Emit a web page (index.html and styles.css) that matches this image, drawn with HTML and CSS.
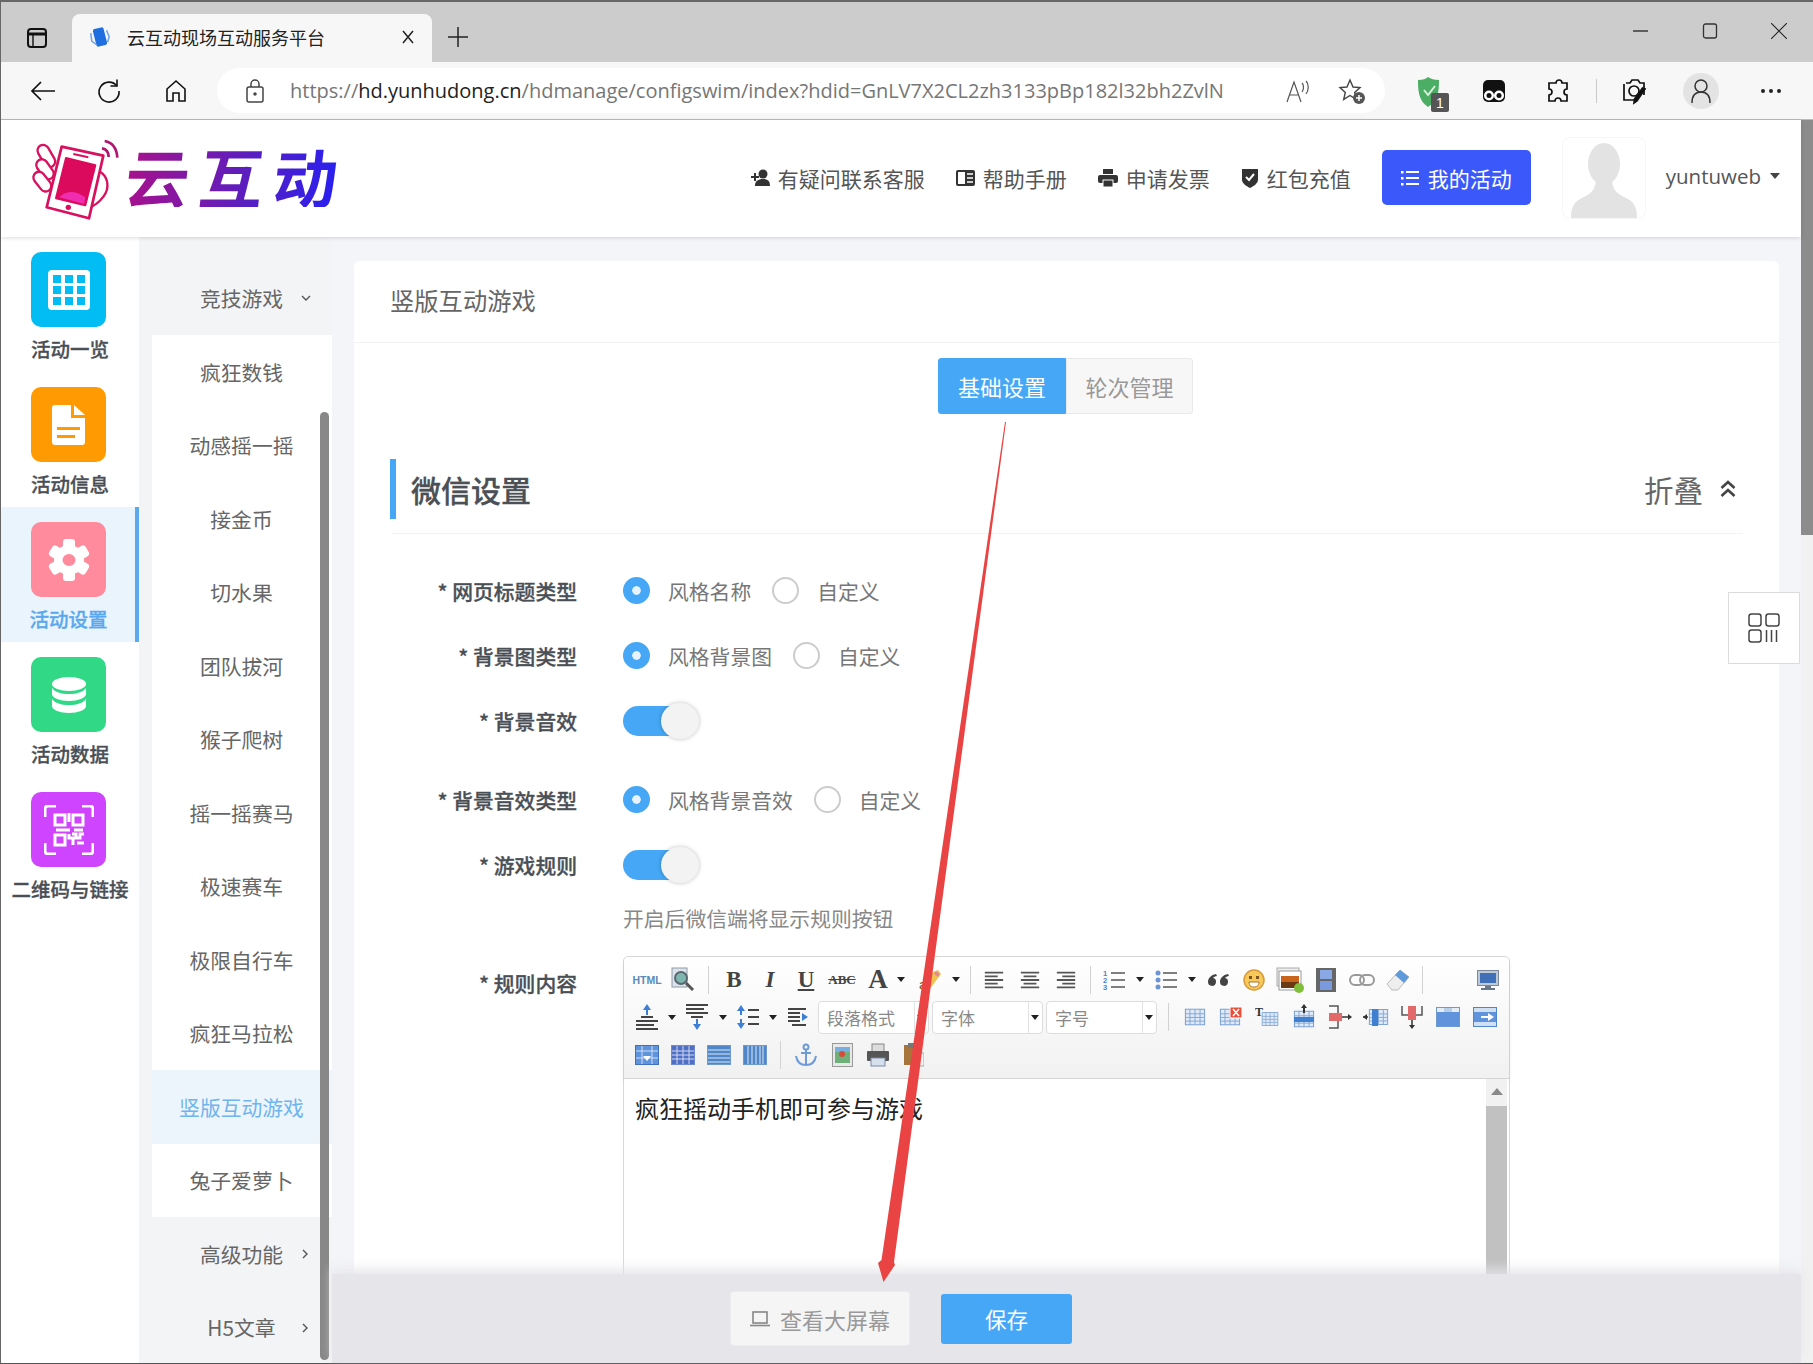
FILE: index.html
```html
<!DOCTYPE html>
<html>
<head>
    <meta charset="utf-8">
    <title>云互动现场互动服务平台</title>
    <link rel="stylesheet" href="styles.css">
</head>
<body>
<svg class="defs" width="0" height="0">
    <defs>
        <symbol id="grid" viewBox="0 0 24 24">
            <rect x="1.5" y="3.5" width="21" height="17" fill="#dfe9f7" stroke="#6f9ad0"/>
            <path d="M1.5 8.5h21M1.5 12.5h21M1.5 16.5h21M6.5 3.5v17M12 3.5v17M17.5 3.5v17" stroke="#7ea4d6" fill="none"/>
        </symbol>
        <symbol id="lines-left" viewBox="0 0 24 24"><path d="M2 4h20M2 8h14M2 12h20M2 16h14M2 20h20" stroke="#555" stroke-width="2" fill="none"/></symbol>
        <symbol id="lines-center" viewBox="0 0 24 24"><path d="M2 4h20M5 8h14M2 12h20M5 16h14M2 20h20" stroke="#555" stroke-width="2" fill="none"/></symbol>
        <symbol id="lines-right" viewBox="0 0 24 24"><path d="M2 4h20M8 8h14M2 12h20M8 16h14M2 20h20" stroke="#555" stroke-width="2" fill="none"/></symbol>
    </defs>
</svg>

<div class="window">
    <!-- browser chrome -->
    <div class="tab-strip">
        <div class="strip-icon">
            <svg width="22" height="22" viewBox="0 0 22 22" fill="none" stroke="#111" stroke-width="2"><rect x="2" y="2" width="18" height="18" rx="3"/><path d="M2 7h18" stroke-width="3"/><path d="M7 7v13" stroke-width="1.4"/></svg>
        </div>
        <div class="tab">
            <svg width="20" height="22" viewBox="0 0 20 22"><g transform="rotate(-14 10 11)"><rect x="4.5" y="2" width="11" height="18" rx="2" fill="#1f6fe0"/><path d="M2 5l-1 8 4 5M18 6l1 7-3 5" stroke="#6aa3ea" stroke-width="1.5" fill="none"/></g></svg>
            <span class="tab-title">云互动现场互动服务平台</span>
            <svg class="tab-close" width="14" height="14" viewBox="0 0 14 14" stroke="#222" stroke-width="1.5"><path d="M2 1l10 12M12 1L2 13"/></svg>
        </div>
        <div class="new-tab">
            <svg width="22" height="22" viewBox="0 0 22 22" stroke="#222" stroke-width="1.5"><path d="M11 1v20M1 11h20"/></svg>
        </div>
        <div class="win-controls">
            <span class="win-btn"><svg width="16" height="16" viewBox="0 0 16 16" stroke="#222" stroke-width="1.3"><path d="M0 8h15"/></svg></span>
            <span class="win-btn"><svg width="16" height="16" viewBox="0 0 16 16" fill="none" stroke="#333" stroke-width="1.3"><rect x="1.5" y="1" width="13" height="14" rx="2"/></svg></span>
            <span class="win-btn"><svg width="16" height="16" viewBox="0 0 16 16" stroke="#222" stroke-width="1.1"><path d="M0 0l16 16M16 0L0 16"/></svg></span>
        </div>
    </div>

    <div class="toolbar">
        <span class="tool-btn nav-first"><svg width="26" height="22" viewBox="0 0 26 22" fill="none" stroke="#111" stroke-width="1.7"><path d="M25 11H2M11 2l-9 9 9 9"/></svg></span>
        <span class="tool-btn"><svg width="26" height="26" viewBox="0 0 26 26" fill="none" stroke="#111" stroke-width="1.6"><path d="M21 8A10 10 0 1 0 23 13"/><path d="M21 1.5V8h-6.500"/></svg></span>
        <span class="tool-btn"><svg width="24" height="24" viewBox="0 0 24 24" fill="none" stroke="#111" stroke-width="1.6"><path d="M3 22V10L12 2l9 8v12h-6v-8H9v8z"/></svg></span>
        <div class="address-bar">
            <svg width="18" height="24" viewBox="0 0 18 24" fill="none" stroke="#444" stroke-width="1.500"><rect x="1" y="8" width="16" height="15" rx="2"/><path d="M5 8V5a4 4 0 0 1 8 0v3"/><circle cx="9" cy="15" r="1" fill="#444"/></svg>
            <span class="url">https://<b>hd.yunhudong.cn</b>/hdmanage/configswim/index?hdid=GnLV7X2CL2zh3133pBp182l32bh2ZvlN</span>
            <svg class="read-icon" width="26" height="24" viewBox="0 0 26 24" fill="none" stroke="#555" stroke-width="1.2"><path d="M1 23L8 3l7 20M4 16h8"/><path d="M16 4c2 2 2 6 0 9M20 2c3 3 3 9 0 13"/></svg>
            <svg class="fav-icon" width="28" height="28" viewBox="0 0 28 28"><path d="M12 3l3 7 7 .6-5.300 4.800 1.600 7L12 18.500 5.700 22.400l1.600-7L2 10.600 9 10z" fill="none" stroke="#444" stroke-width="1.400"/><circle cx="21" cy="21" r="6" fill="#555"/><path d="M21 18v6M18 21h6" stroke="#fff" stroke-width="1.500"/></svg>
        </div>
        <span class="ext-btn ext-first">
            <svg width="34" height="36" viewBox="0 0 34 36"><path d="M2 3c5 0 8-1 10-3 3 2 6 3 11 3 0 12-1 21-11 27C3 24 2 15 2 3z" fill="#4cae64"/><path d="M8 13l4 5 7-9" fill="none" stroke="#d9f0dd" stroke-width="2"/><rect x="15" y="16" width="18" height="19" rx="2" fill="#555"/><text x="24" y="31" font-size="14" text-anchor="middle" fill="#fff" font-family="Liberation Sans">1</text></svg>
        </span>
        <span class="ext-btn"><svg width="24" height="24" viewBox="0 0 24 24"><rect x="1" y="1" width="22" height="22" rx="5" fill="#111"/><circle cx="7" cy="16.500" r="5" fill="#fff"/><circle cx="17" cy="16.500" r="5" fill="#fff"/><circle cx="7" cy="16.500" r="2.500" fill="#111"/><circle cx="17" cy="16.500" r="2.500" fill="#111"/></svg></span>
        <span class="ext-btn"><svg width="24" height="26" viewBox="0 0 24 26" fill="none" stroke="#111" stroke-width="1.700"><path d="M9 5a3 3 0 0 1 6 0h5v6a3 3 0 0 0 0 6v6h-6a3 3 0 0 0-6 0H2v-6a3 3 0 0 0 0-6V5z"/></svg></span>
        <span class="ext-divider"></span>
        <span class="ext-btn"><svg width="28" height="28" viewBox="0 0 28 28" fill="none" stroke="#111" stroke-width="1.700"><path d="M5 6h4l2-3h6l2 3h4v12M3 7v16h10"/><circle cx="13" cy="14" r="5"/><path d="M24 12l-8 12-3 2 .5-4 8-11z" fill="#111"/></svg></span>
        <span class="profile-btn"><svg width="20" height="26" viewBox="0 0 20 26" fill="none" stroke="#333" stroke-width="1.500"><circle cx="10" cy="8" r="6"/><path d="M1 25c0-7 3-11 9-11s9 4 9 11"/></svg></span>
        <span class="more-btn"><i></i><i></i><i></i></span>
    </div>

    <div class="page">
        <div class="page-inner">
            <!-- site header -->
            <div class="site-header">
                <svg class="logo-mark" width="110" height="95" viewBox="0 0 330 285" fill="none" stroke="#d8115f">
                    <g stroke-width="7">
                        <rect x="62" y="42" width="34" height="72" rx="17" transform="rotate(-30 79 78)" fill="#fff"/>
                        <rect x="58" y="85" width="34" height="66" rx="17" transform="rotate(-35 75 118)" fill="#fff"/>
                        <rect x="50" y="122" width="34" height="66" rx="17" transform="rotate(-38 67 155)" fill="#fff"/>
                        <path d="M240 125c25 15 30 50 10 75-10 14-22 26-42 32"/>
                    </g>
                    <path d="M125 50L250 77 207 265 80 232z" fill="#fff" stroke-width="8" stroke-linejoin="round"/>
                    <path d="M138 84L226 106 196 226 108 205z" fill="#dc0a5c" stroke="#dc0a5c" stroke-width="6" stroke-linejoin="round"/>
                    <path d="M118 202c15-18 45-25 78 0l-4 20z" fill="#f02db0" stroke="none"/>
                    <path d="M160 72l45 10" stroke-width="6"/>
                    <circle cx="145" cy="232" r="8" fill="#dc0a5c" stroke="none"/>
                    <path d="M246 55c12 2 20 12 20 26M254 33c22 4 36 22 38 50" stroke="#b3146e" stroke-width="8"/>
                </svg>
                <span class="logo-text">云互动</span>
                <div class="header-nav">
                    <a class="header-link"><svg width="19" height="18" viewBox="0 0 19 18" fill="#333"><circle cx="12" cy="5" r="4.500"/><path d="M4 17c0-5 3-7 8-7s7 2 7 7zM3 4h2v3h3v2H5v3H3V9H0V7h3z"/></svg>有疑问联系客服</a>
                    <a class="header-link"><svg width="19" height="16" viewBox="0 0 19 16"><rect width="19" height="16" rx="2" fill="#333"/><rect x="2" y="2" width="7" height="12" fill="#fff"/><path d="M11 4h6M11 8h6M11 12h6" stroke="#fff" stroke-width="1.400"/></svg>帮助手册</a>
                    <a class="header-link"><svg width="20" height="18" viewBox="0 0 20 18" fill="#333"><rect x="5" y="0" width="10" height="5"/><rect x="0" y="6" width="20" height="8" rx="2"/><rect x="5" y="11" width="10" height="7" fill="#333" stroke="#fff"/></svg>申请发票</a>
                    <a class="header-link"><svg width="18" height="20" viewBox="0 0 18 20"><path d="M1 1h16v11c0 3-4 6-8 8-4-2-8-5-8-8z" fill="#333"/><path d="M5 9l3 3 5-6" fill="none" stroke="#fff" stroke-width="2"/></svg>红包充值</a>
                    <a class="my-btn"><svg width="18" height="16" viewBox="0 0 18 16" fill="#fff"><rect x="0" y="1" width="2.500" height="2.500"/><rect x="0" y="7" width="2.500" height="2.500"/><rect x="0" y="13" width="2.500" height="2.500"/><rect x="5" y="1" width="13" height="2"/><rect x="5" y="7" width="13" height="2"/><rect x="5" y="13" width="13" height="2"/></svg>我的活动</a>
                    <div class="avatar">
                        <svg width="70" height="76" viewBox="0 0 70 76" fill="#e3e3e3"><ellipse cx="35" cy="22" rx="16" ry="21"/><path d="M27 38h16c1 10 4 13 14 18 7 3 11 8 11 20H2c0-12 4-17 11-20 10-5 13-8 14-18z"/></svg>
                    </div>
                    <div class="user-name">yuntuweb<i class="user-caret"></i></div>
                </div>
            </div>

            <div class="page-body">
                <!-- first level menu -->
                <div class="side-nav">
                    <div class="side-item">
                        <span class="side-icon icon-blue"><svg width="42" height="40" viewBox="0 0 42 40"><rect width="42" height="40" rx="4" fill="#fff"/><g fill="#01bdf3"><rect x="5" y="5" width="8" height="8"/><rect x="17" y="5" width="8" height="8"/><rect x="29" y="5" width="8" height="8"/><rect x="5" y="16" width="8" height="8"/><rect x="17" y="16" width="8" height="8"/><rect x="29" y="16" width="8" height="8"/><rect x="5" y="27" width="8" height="8"/><rect x="17" y="27" width="8" height="8"/><rect x="29" y="27" width="8" height="8"/></g></svg></span>
                        <span class="side-label">活动一览</span>
                    </div>
                    <div class="side-item">
                        <span class="side-icon icon-orange"><svg width="33" height="40" viewBox="0 0 33 40"><path d="M3 0h16v13h14v24a3 3 0 0 1-3 3H3a3 3 0 0 1-3-3V3a3 3 0 0 1 3-3z" fill="#fff"/><path d="M22 0l11 10H22z" fill="#fff"/><path d="M5 22h23v3H5zM5 30h18v3H5z" fill="#ff9a02"/></svg></span>
                        <span class="side-label">活动信息</span>
                    </div>
                    <div class="side-item side-item-on">
                        <span class="side-icon icon-pink"><svg width="42" height="42" viewBox="0 0 42 42"><g fill="#fff"><rect x="15" y="0" width="12" height="42" rx="3"/><rect x="15" y="0" width="12" height="42" rx="3" transform="rotate(60 21 21)"/><rect x="15" y="0" width="12" height="42" rx="3" transform="rotate(120 21 21)"/><circle cx="21" cy="21" r="15"/></g><ellipse cx="21" cy="21" rx="6.500" ry="6" fill="#ff8b9c"/></svg></span>
                        <span class="side-label">活动设置</span>
                    </div>
                    <div class="side-item">
                        <span class="side-icon icon-green"><svg width="34" height="36" viewBox="0 0 34 36" fill="#fff"><ellipse cx="17" cy="7" rx="17" ry="7"/><path d="M0 11c3 4 9 6 17 6s14-2 17-6v6c0 4-8 7-17 7S0 21 0 17z"/><path d="M0 22c3 4 9 6 17 6s14-2 17-6v7c0 4-8 7-17 7S0 33 0 29z"/></svg></span>
                        <span class="side-label">活动数据</span>
                    </div>
                    <div class="side-item">
                        <span class="side-icon icon-purple"><svg width="50" height="50" viewBox="0 0 50 50" fill="none" stroke="#fff"><path d="M1 12V4a3 3 0 0 1 3-3h8M38 1h8a3 3 0 0 1 3 3v8M49 38v8a3 3 0 0 1-3 3h-8M12 49H4a3 3 0 0 1-3-3v-8" stroke-width="3"/><g stroke-width="3"><rect x="11" y="10" width="10" height="10"/><rect x="29" y="10" width="10" height="10"/><rect x="11" y="30" width="10" height="10"/></g><path d="M25 8v9M26 25H12M30 25h9M28 29h4v4h4v-4h4M25 29v4h4v7M33 38h7" stroke-width="3"/></svg></span>
                        <span class="side-label">二维码与链接</span>
                    </div>
                </div>

                <!-- second level menu -->
                <div class="sub-nav">
                    <div class="sub-item sub-group">竞技游戏<svg class="sub-arrow" width="10" height="8" viewBox="0 0 10 8" fill="none" stroke="#555" stroke-width="1.400"><path d="M1 2l4 4 4-4"/></svg></div>
                    <div class="sub-item">疯狂数钱</div>
                    <div class="sub-item">动感摇一摇</div>
                    <div class="sub-item">接金币</div>
                    <div class="sub-item">切水果</div>
                    <div class="sub-item">团队拔河</div>
                    <div class="sub-item">猴子爬树</div>
                    <div class="sub-item">摇一摇赛马</div>
                    <div class="sub-item">极速赛车</div>
                    <div class="sub-item">极限自行车</div>
                    <div class="sub-item">疯狂马拉松</div>
                    <div class="sub-item sub-item-on">竖版互动游戏</div>
                    <div class="sub-item">兔子爱萝卜</div>
                    <div class="sub-item sub-group">高级功能<svg class="sub-arrow" width="8" height="10" viewBox="0 0 8 10" fill="none" stroke="#555" stroke-width="1.400"><path d="M2 1l4 4-4 4"/></svg></div>
                    <div class="sub-item sub-group">H5文章<svg class="sub-arrow" width="8" height="10" viewBox="0 0 8 10" fill="none" stroke="#555" stroke-width="1.400"><path d="M2 1l4 4-4 4"/></svg></div>
                    <div class="sub-thumb"></div>
                </div>

                <div class="main">
                    <div class="main-scroll">
                        <div class="card">
                            <div class="card-title">竖版互动游戏</div>
                            <div class="tabs">
                                <span class="tab-btn tab-btn-on">基础设置</span>
                                <span class="tab-btn">轮次管理</span>
                            </div>

                            <div class="section-head">
                                <span class="section-title">微信设置</span>
                                <span class="fold">折叠<svg width="16" height="18" viewBox="0 0 16 18" fill="none" stroke="#444" stroke-width="2.600"><path d="M1.500 8L8 2l6.500 6M1.500 16L8 10l6.500 6"/></svg></span>
                            </div>

                            <div class="form-row">
                                <label class="form-label">* 网页标题类型</label>
                                <span class="radio radio-on"></span><span class="radio-text">风格名称</span>
                                <span class="radio"></span><span class="radio-text">自定义</span>
                            </div>
                            <div class="form-row">
                                <label class="form-label">* 背景图类型</label>
                                <span class="radio radio-on"></span><span class="radio-text">风格背景图</span>
                                <span class="radio"></span><span class="radio-text">自定义</span>
                            </div>
                            <div class="form-row">
                                <label class="form-label">* 背景音效</label>
                                <span class="switch"><i></i></span>
                            </div>
                            <div class="form-row form-row-gap">
                                <label class="form-label">* 背景音效类型</label>
                                <span class="radio radio-on"></span><span class="radio-text">风格背景音效</span>
                                <span class="radio"></span><span class="radio-text">自定义</span>
                            </div>
                            <div class="form-row">
                                <label class="form-label">* 游戏规则</label>
                                <span class="switch"><i></i></span>
                            </div>
                            <div class="form-hint">开启后微信端将显示规则按钮</div>

                            <div class="editor-row">
                                <label class="form-label editor-label">* 规则内容</label>
                                <div class="editor">
                                    <div class="editor-bar">
                                        <div class="bar-row">
                                            <span class="tb tb-html">HTML</span>
                                            <span class="tb"><svg width="24" height="25" viewBox="0 0 24 25"><rect x="1" y="1" width="15" height="19" fill="#dde3ea" stroke="#8c99a8"/><circle cx="10" cy="11" r="6" fill="#7fb6b0" stroke="#5a6670" stroke-width="2"/><path d="M15 16l7 7" stroke="#555" stroke-width="3"/></svg></span>
                                            <span class="sep"></span>
                                            <span class="tb tb-b">B</span>
                                            <span class="tb tb-i">I</span>
                                            <span class="tb tb-u">U</span>
                                            <span class="tb tb-abc">ABC</span>
                                            <span class="tb tb-a">A</span><span class="caret caret-tight"></span>
                                            <span class="tb"><svg width="26" height="24" viewBox="0 0 26 24"><path d="M3 20l8-14 10-4 3 4-12 16z" fill="#f2c24e"/><path d="M19 3l4 3-2 3-4-3z" fill="#e08a9a"/><text x="2" y="21" font-size="13" font-family="Liberation Sans" fill="#6b5a20">a</text></svg></span><span class="caret"></span>
                                            <span class="sep sep-tight"></span>
                                            <span class="tb"><svg width="22" height="22"><use href="#lines-left"/></svg></span>
                                            <span class="tb"><svg width="22" height="22"><use href="#lines-center"/></svg></span>
                                            <span class="tb"><svg width="22" height="22"><use href="#lines-right"/></svg></span>
                                            <span class="sep sep-tight"></span>
                                            <span class="tb"><svg width="22" height="22" viewBox="0 0 22 22"><text x="0" y="7" font-size="7.500" font-family="Liberation Sans" font-weight="bold" fill="#4a7fd0">1</text><text x="0" y="14" font-size="7.500" font-family="Liberation Sans" font-weight="bold" fill="#4a7fd0">2</text><text x="0" y="21" font-size="7.500" font-family="Liberation Sans" font-weight="bold" fill="#4a7fd0">3</text><path d="M8 4h14M8 11h14M8 18h14" stroke="#555" stroke-width="1.600"/></svg></span><span class="caret"></span>
                                            <span class="tb"><svg width="22" height="22" viewBox="0 0 22 22"><circle cx="3" cy="4" r="2.500" fill="#6b93d6"/><circle cx="3" cy="11" r="2.500" fill="#6b93d6"/><circle cx="3" cy="18" r="2.500" fill="#6b93d6"/><path d="M8 4h14M8 11h14M8 18h14" stroke="#555" stroke-width="1.600"/></svg></span><span class="caret"></span>
                                            <span class="tb"><svg width="22" height="14" viewBox="0 0 22 14" fill="#444"><path d="M9 1C4 2 1 5 1 9a4 4 0 1 0 5-4c1-1 2-2 4-2zM21 1c-5 1-8 4-8 8a4 4 0 1 0 5-4c1-1 2-2 4-2z"/></svg></span>
                                            <span class="tb"><svg width="22" height="22" viewBox="0 0 22 22"><circle cx="11" cy="11" r="10" fill="#f8c95a" stroke="#d99a3c" stroke-width="1.500"/><rect x="6" y="7" width="3" height="3" fill="#7a5520"/><rect x="13" y="7" width="3" height="3" fill="#7a5520"/><path d="M6 13h10c0 4-3 5-5 5s-5-1-5-5z" fill="#fff" stroke="#a8762c"/></svg></span>
                                            <span class="tb"><svg width="28" height="26" viewBox="0 0 28 26"><rect x="1" y="1" width="22" height="18" fill="#eee" stroke="#aaa"/><rect x="3" y="4" width="22" height="19" fill="#fff" stroke="#999"/><rect x="5" y="9" width="18" height="12" fill="#c8651a"/><path d="M5 15h18v6H5z" fill="#6b3a12"/><circle cx="23" cy="21" r="5" fill="#7fbf3a"/></svg></span>
                                            <span class="tb"><svg width="22" height="24" viewBox="0 0 22 24"><rect x="1" y="0" width="20" height="24" fill="#666"/><rect x="5" y="2" width="12" height="9" fill="#8aa8e6"/><rect x="5" y="13" width="12" height="9" fill="#7a9ae0"/></svg></span>
                                            <span class="tb"><svg width="26" height="14" viewBox="0 0 26 14" fill="none" stroke="#999" stroke-width="2"><rect x="1" y="2" width="14" height="10" rx="5"/><rect x="11" y="2" width="14" height="10" rx="5"/></svg></span>
                                            <span class="tb"><svg width="26" height="24" viewBox="0 0 26 24"><path d="M2 16L15 2l9 7-11 13H7z" fill="#eee" stroke="#bbb"/><path d="M15 2l9 7-5 6-9-8z" fill="#5f9bdc"/></svg></span>
                                            <span class="sep sep-wide"></span>
                                            <span class="tb"><svg width="22" height="20" viewBox="0 0 22 20"><rect x="0.500" y="0.500" width="21" height="15" fill="#bfc9d6" stroke="#7a8a9c"/><rect x="3" y="3" width="16" height="10" fill="#3f70b8"/><path d="M8 16h6v2H8zM4 18h14v2H4z" fill="#6a7786"/></svg></span>
                                        </div>
                                        <div class="bar-row bar-row-two">
                                            <span class="tb"><svg width="22" height="26" viewBox="0 0 22 26"><path d="M11 0l-4 6h8zM10 6h2v5h-2z" fill="#3d7fd4"/><path d="M5 13h12M0 17h22M0 21h18M0 25h22" stroke="#444" stroke-width="2"/></svg></span><span class="caret"></span>
                                            <span class="tb"><svg width="22" height="26" viewBox="0 0 22 26"><path d="M0 1h22M0 5h18M0 9h22M5 13h12" stroke="#444" stroke-width="2"/><path d="M11 26l-4-6h8zM10 15h2v5h-2z" fill="#3d7fd4"/></svg></span><span class="caret"></span>
                                            <span class="tb"><svg width="22" height="26" viewBox="0 0 22 26"><path d="M4 1L0 7h8zM3 7h2v4H3zM4 25l-4-6h8zM3 15h2v4H3z" fill="#3d7fd4"/><path d="M11 6h11M11 13h11M11 20h11" stroke="#444" stroke-width="2"/></svg></span><span class="caret"></span>
                                            <span class="tb"><svg width="20" height="20" viewBox="0 0 20 20"><path d="M0 2h18M0 6h12M0 10h12M0 14h12M4 18h14" stroke="#444" stroke-width="2"/><path d="M14 6l6 4-6 4z" fill="#3d7fd4"/></svg></span>
                                            <span class="ed-select ed-select-first">段落格式</span>
                                            <span class="ed-select">字体</span>
                                            <span class="ed-select">字号</span>
                                            <span class="sep sep-narrow"></span>
                                            <span class="tb tb-table"><svg width="22" height="22"><use href="#grid"/></svg></span>
                                            <span class="tb tb-table"><svg width="24" height="22" viewBox="0 0 24 22"><use href="#grid" width="22" height="22"/><rect x="11" y="1" width="12" height="11" fill="#e8503a" stroke="#fff"/><path d="M14 3l6 7M20 3l-6 7" stroke="#fff" stroke-width="1.500"/></svg></span>
                                            <span class="tb tb-table"><svg width="24" height="24" viewBox="0 0 24 24"><use href="#grid" x="6" y="4" width="18" height="20"/><text x="0" y="11" font-size="12" font-weight="bold" font-family="Liberation Serif" fill="#333">T</text></svg></span>
                                            <span class="tb tb-table"><svg width="22" height="26" viewBox="0 0 22 26"><use href="#grid" y="4" width="22" height="22"/><rect x="1" y="13" width="20" height="5" fill="#3f80d0"/><path d="M11 0l-3 4h6zM10 4h2v5h-2z" fill="#333"/></svg></span>
                                            <span class="tb tb-table"><svg width="24" height="24" viewBox="0 0 24 24"><path d="M1 1h9v22H1" fill="none" stroke="#555" stroke-width="1.500"/><rect x="1" y="8" width="13" height="8" fill="#e26a6a"/><path d="M14 12h6" stroke="#333" stroke-width="1.500"/><path d="M24 12l-4-3v6z" fill="#333"/></svg></span>
                                            <span class="tb tb-table"><svg width="26" height="22" viewBox="0 0 26 22"><use href="#grid" x="5" width="21" height="22"/><rect x="9" y="3" width="6" height="17" fill="#3f80d0"/><path d="M0 11h5" stroke="#333" stroke-width="1.500"/><path d="M0 11l4-3v6z" fill="#333"/></svg></span>
                                            <span class="tb tb-table"><svg width="22" height="24" viewBox="0 0 22 24"><path d="M1 1v9h20V1" fill="none" stroke="#555" stroke-width="1.500"/><rect x="7" y="1" width="8" height="14" fill="#e26a6a"/><path d="M11 15v6" stroke="#333" stroke-width="1.500"/><path d="M11 24l-3-4h6z" fill="#333"/></svg></span>
                                            <span class="tb tb-table"><svg width="24" height="22" viewBox="0 0 24 22"><rect x="0.500" y="1.500" width="23" height="19" fill="#5f93dc" stroke="#6f9ad0"/><rect x="1" y="2" width="22" height="4" fill="#e3ecf8"/><rect x="8" y="2" width="8" height="4" fill="#b8cdea"/></svg></span>
                                            <span class="tb tb-table"><svg width="24" height="22" viewBox="0 0 24 22"><rect x="0.500" y="1.500" width="23" height="19" fill="#cfe0f5" stroke="#4f86c8"/><rect x="1" y="6" width="22" height="10" fill="#5f93dc"/><path d="M8 11h8" stroke="#fff" stroke-width="2"/><path d="M21 11l-6-4v8z" fill="#fff"/></svg></span>
                                        </div>
                                        <div class="bar-row">
                                            <span class="tb"><svg width="24" height="22" viewBox="0 0 24 22"><rect x="0.500" y="1.500" width="23" height="19" fill="#5f93dc" stroke="#3f70b8"/><path d="M1 7h22M1 14h22M7 2v18M17 2v18" stroke="#cfe0f5"/><path d="M12 17l-4-5h8z" fill="#fff"/></svg></span>
                                            <span class="tb"><svg width="24" height="22" viewBox="0 0 24 22"><rect x="0.500" y="1.500" width="23" height="19" fill="#4f6fc4" stroke="#6f8ad0"/><path d="M1 7h22M1 11h22M1 15h22M6 2v18M12 2v18M18 2v18" stroke="#cfd9f0"/></svg></span>
                                            <span class="tb"><svg width="24" height="22" viewBox="0 0 24 22"><rect x="0.500" y="1.500" width="23" height="19" fill="#4f86c8" stroke="#6f9ad0"/><path d="M1 6h22M1 10h22M1 14h22M1 18h22" stroke="#dbe7f6"/></svg></span>
                                            <span class="tb"><svg width="24" height="22" viewBox="0 0 24 22"><rect x="0.500" y="1.500" width="23" height="19" fill="#4f86c8" stroke="#6f9ad0"/><path d="M5 2v18M9 2v18M13 2v18M17 2v18M20 2v18" stroke="#dbe7f6"/></svg></span>
                                            <span class="sep"></span>
                                            <span class="tb"><svg width="24" height="24" viewBox="0 0 24 24" fill="none" stroke="#6f9bd8" stroke-width="2"><circle cx="12" cy="4" r="2.500"/><path d="M12 7v15M7 10h10M2 13c1 6 5 9 10 9s9-3 10-9"/></svg></span>
                                            <span class="tb"><svg width="21" height="24" viewBox="0 0 21 24"><rect x="0.500" y="0.500" width="20" height="23" fill="#e8e8e8" stroke="#999"/><rect x="3" y="4" width="15" height="16" fill="#6fb07a"/><path d="M3 4h15v5H3z" fill="#78aee0"/><circle cx="10" cy="11" r="3" fill="#d84a3a"/></svg></span>
                                            <span class="tb"><svg width="22" height="24" viewBox="0 0 22 24"><rect x="5" y="1" width="12" height="8" fill="#ddd" stroke="#888"/><rect x="0" y="8" width="22" height="10" rx="1" fill="#555"/><rect x="4" y="15" width="14" height="8" fill="#d6dfee" stroke="#7a8aa0"/></svg></span>
                                            <span class="tb"><svg width="20" height="24" viewBox="0 0 20 24"><rect x="0" y="2" width="14" height="20" fill="#a9743a"/><rect x="4" y="0" width="6" height="5" fill="#777"/><rect x="9" y="10" width="11" height="13" fill="#f2f2f2" stroke="#aaa"/></svg></span>
                                        </div>
                                    </div>
                                    <div class="editor-body">
                                        <div class="editor-text">疯狂摇动手机即可参与游戏</div>
                                        <div class="editor-scroll">
                                            <span class="scroll-up"></span>
                                            <span class="scroll-thumb"></span>
                                        </div>
                                    </div>
                                </div>
                            </div>
                        </div>
                    </div>

                    <div class="footer-bar">
                        <a class="btn-screen"><svg width="20" height="16" viewBox="0 0 20 16" fill="none" stroke="#888" stroke-width="1.600"><rect x="3" y="1" width="14" height="11"/><path d="M0 14.500h20"/></svg>查看大屏幕</a>
                        <a class="btn-save">保存</a>
                    </div>

                    <div class="quick-btn">
                        <svg width="32" height="30" viewBox="0 0 32 30" fill="none" stroke="#444" stroke-width="1.500"><rect x="1" y="1" width="12" height="12" rx="2.500"/><rect x="18" y="1" width="13" height="12" rx="2.500"/><rect x="1" y="17" width="12" height="12" rx="2.500"/><path d="M18.500 17v12M23.500 17v12M28.500 17v12"/></svg>
                    </div>
                </div>
            </div>
        </div>

        <div class="window-scroll"><span class="window-thumb"></span></div>
    </div>

    <!-- red annotation arrow drawn on top of the screenshot -->
    <svg class="red-arrow" width="1813" height="1364" viewBox="0 0 1813 1364">
        <path d="M1005 422L1006 422 894 1262 895 1265 883.500 1282 878 1263 881.500 1260z" fill="#e94343"/>
    </svg>
</div>
</body>
</html>
```

FILE: styles.css
```css
* {
    box-sizing: border-box;
}
html, body {
    margin: 0;
    padding: 0;
}
body {
    width: 1813px;
    height: 1364px;
    overflow: hidden;
    background: #fff;
    font-family: "Noto Sans CJK SC", "Noto Sans", sans-serif;
    color: #555;
}
.defs {
    position: absolute;
}
.window {
    position: relative;
    display: flex;
    flex-direction: column;
    width: 1813px;
    height: 1364px;
    border-left: 1px solid #666;
    border-bottom: 1px solid #555;
}

/* browser chrome */
.tab-strip {
    display: flex;
    height: 62px;
    padding-top: 12px;
    background: #cccccc;
    border-top: 2px solid #666;
}
.strip-icon {
    width: 71px;
    display: flex;
    justify-content: center;
    align-items: center;
}
.tab {
    width: 360px;
    display: flex;
    align-items: center;
    padding: 0 17px 2px 18px;
    background: #f7f7f7;
    border-radius: 8px 8px 0 0;
}
.tab-title {
    margin-left: 17px;
    font-size: 18px;
    color: #222;
}
.tab-close {
    margin-left: auto;
}
.new-tab {
    width: 52px;
    display: flex;
    justify-content: center;
    align-items: center;
    padding-bottom: 3px;
}
.win-controls {
    display: flex;
    margin-left: auto;
    margin-top: -2px;
}
.win-btn {
    width: 69px;
    height: 46px;
    display: flex;
    justify-content: center;
    align-items: center;
    padding-bottom: 8px;
}
.toolbar {
    display: flex;
    align-items: center;
    height: 58px;
    background: #f7f7f7;
    border-bottom: 1px solid #bbb;
}
.tool-btn {
    width: 66.5px;
    display: flex;
    justify-content: center;
}
.nav-first {
    width: 75px;
    padding-left: 8px;
}
.address-bar {
    display: flex;
    align-items: center;
    width: 1168px;
    height: 45px;
    margin-left: 8px;
    padding-left: 29px;
    background: #fff;
    border-radius: 23px;
}
.url {
    margin-left: 26px;
    width: 996px;
    font-family: "Open Sans", sans-serif;
    font-size: 20px;
    color: #767676;
    white-space: nowrap;
}
.url b {
    font-weight: 400;
    color: #222;
}
.read-icon {
    flex: none;
}
.fav-icon {
    flex: none;
    margin-left: 26px;
}
.ext-btn {
    width: 65px;
    display: flex;
    justify-content: center;
}
.ext-first {
    margin-left: 11px;
    padding-left: 8px;
    padding-top: 8px;
}
.ext-divider {
    width: 1px;
    height: 24px;
    margin: 0 5px;
    background: #c9c9c9;
}
.profile-btn {
    width: 36px;
    height: 36px;
    margin: 0 16px 0 16px;
    display: flex;
    justify-content: center;
    align-items: center;
    background: #e3e3e3;
    border-radius: 50%;
}
.more-btn {
    display: flex;
    gap: 4px;
    margin-left: 26px;
}
.more-btn i {
    width: 4px;
    height: 4px;
    background: #222;
    border-radius: 50%;
}

/* page */
.page {
    flex: 1;
    display: flex;
    min-height: 0;
}
.page-inner {
    flex: 1;
    display: flex;
    flex-direction: column;
    min-width: 0;
}
.window-scroll {
    width: 12px;
    background: #f1f1f1;
}
.window-thumb {
    display: block;
    height: 415px;
    background: #8c8c8c;
}
.site-header {
    position: relative;
    z-index: 2;
    display: flex;
    align-items: center;
    height: 117px;
    padding: 0 21px 2px 19px;
    background: #fff;
    box-shadow: 0 1px 4px rgba(0, 0, 0, .14);
}
.logo-mark {
    flex: none;
}
.logo-text {
    margin: -5px 0 0 -4px;
    font-size: 64px;
    font-weight: 700;
    line-height: 1;
    letter-spacing: 10px;
    white-space: nowrap;
    background: linear-gradient(90deg, #a8118c 0%, #5a1ec0 55%, #2320f5 100%);
    -webkit-background-clip: text;
    background-clip: text;
    color: transparent;
    transform: skewX(-6deg);
}
.header-nav {
    display: flex;
    align-items: center;
    gap: 31px;
    margin-left: auto;
}
.header-link {
    display: flex;
    align-items: center;
    gap: 8px;
    font-size: 21px;
    color: #555;
    white-space: nowrap;
}
.my-btn {
    display: flex;
    align-items: center;
    justify-content: center;
    gap: 9px;
    width: 149px;
    height: 55px;
    font-size: 21px;
    color: #fff;
    background: #3b59fb;
    border-radius: 5px;
}
.avatar {
    width: 84px;
    height: 82px;
    display: flex;
    justify-content: center;
    align-items: flex-end;
    margin-right: -11px;
    background: #fff;
    border: 1px solid #f6f6f6;
    border-radius: 8px;
}
.user-name {
    display: flex;
    align-items: center;
    margin-top: -3px;
    font-family: "Open Sans", sans-serif;
    font-size: 20.5px;
    color: #555;
}
.user-caret {
    width: 0;
    height: 0;
    margin-left: 9px;
    border-top: 6px solid #444;
    border-left: 5px solid transparent;
    border-right: 5px solid transparent;
}
.page-body {
    flex: 1;
    display: flex;
    min-height: 0;
}

/* first level menu */
.side-nav {
    width: 138px;
    flex: none;
    background: #fff;
}
.side-item {
    position: relative;
    height: 135px;
    padding-top: 15px;
    display: flex;
    flex-direction: column;
    align-items: center;
}
.side-item-on {
    background: #eaf4fd;
}
.side-item-on::after {
    content: "";
    position: absolute;
    top: 0;
    right: 0;
    bottom: 0;
    width: 4px;
    background: #5aa9ee;
}
.side-icon {
    width: 75px;
    height: 75px;
    margin-right: 3px;
    display: flex;
    justify-content: center;
    align-items: center;
    border-radius: 10px;
}
.icon-blue { background: #01bdf3; }
.icon-orange { background: #ff9a02; }
.icon-pink { background: #ff8b9c; }
.icon-green { background: #31d986; }
.icon-purple { background: #cf44ff; }
.side-label {
    margin-top: 7px;
    font-size: 19.5px;
    font-weight: 500;
    line-height: 30px;
    color: #4a4f55;
    white-space: nowrap;
    -webkit-text-stroke: .3px currentColor;
}
.side-item-on .side-label {
    color: #5aa9ee;
    margin-right: 3px;
}

/* second level menu */
.sub-nav {
    position: relative;
    width: 193px;
    flex: none;
    padding: 24.5px 0 0 13px;
    background: #f3f4f6;
    overflow: hidden;
}
.sub-item {
    position: relative;
    display: flex;
    align-items: center;
    justify-content: center;
    height: 73.5px;
    padding-right: 1px;
    font-size: 20.8px;
    color: #666;
    background: #fff;
}
.sub-group {
    background: #f3f4f6;
}
.sub-item-on {
    color: #6fb4ee;
    background: #edf5fc;
}
.sub-arrow {
    position: absolute;
    left: 149px;
    top: 32px;
}
.sub-thumb {
    position: absolute;
    left: 181px;
    top: 175px;
    width: 9px;
    height: 948px;
    background: #888;
    border-radius: 5px;
}

/* main column */
.main {
    position: relative;
    flex: 1;
    display: flex;
    flex-direction: column;
    min-width: 0;
    background: #f4f5f9;
}
.main-scroll {
    flex: 1;
    min-height: 0;
    overflow: hidden;
    padding: 24px 22px 0 22px;
}
.card {
    padding: 0 36px 0 36px;
    background: #fff;
    border-radius: 6px;
}
.card-title {
    height: 82px;
    margin: 0 -36px;
    padding-left: 36px;
    font-size: 24.3px;
    line-height: 78px;
    color: #666;
    border-bottom: 1px solid #f3f3f3;
}
.tabs {
    display: flex;
    justify-content: center;
    margin-top: 15px;
    padding-right: 2px;
}
.tab-btn {
    width: 127px;
    height: 56px;
    font-size: 22px;
    line-height: 54px;
    text-align: center;
    color: #999;
    background: #f7f7f7;
    border: 1px solid #e9e9e9;
    border-radius: 0 3px 3px 0;
}
.tab-btn-on {
    width: 128px;
    color: #fff;
    background: #45a7f5;
    border-color: #45a7f5;
    border-radius: 3px 0 0 3px;
}
.section-head {
    position: relative;
    display: flex;
    align-items: center;
    justify-content: space-between;
    height: 60px;
    margin-top: 45px;
    padding: 0 7px 0 21px;
}
.section-head::before {
    content: "";
    position: absolute;
    left: 0;
    top: 0;
    bottom: 0;
    width: 6px;
    background: #45a7f5;
}
.section-head::after {
    content: "";
    position: absolute;
    left: 1px;
    right: 0;
    bottom: -15px;
    height: 1px;
    background: #f3f3f3;
}
.section-title {
    font-size: 30px;
    font-weight: 500;
    color: #4a5056;
    -webkit-text-stroke: .3px currentColor;
}
.fold {
    display: flex;
    align-items: center;
    gap: 17px;
    font-size: 29.5px;
    color: #666;
}

/* form */
.form-row {
    display: flex;
    align-items: center;
    height: 65px;
}
.section-head + .form-row {
    margin-top: 39px;
}
.form-row-gap {
    margin-top: 14px;
}
.form-label {
    flex: none;
    width: 187px;
    margin-right: 46px;
    font-size: 20.8px;
    font-weight: 500;
    text-align: right;
    color: #4a4f55;
    -webkit-text-stroke: .3px currentColor;
}
.radio {
    flex: none;
    width: 27px;
    height: 27px;
    background: #fff;
    border: 2px solid #ccc;
    border-radius: 50%;
}
.radio-on {
    background: #45a7f5;
    border: 9px solid #45a7f5;
    box-shadow: inset 0 0 0 5px #e8f3fd;
}
.radio-text {
    margin: 0 21px 0 18px;
    font-size: 20.8px;
    color: #777;
}
.switch {
    position: relative;
    width: 74px;
    height: 30px;
    margin-top: 1px;
    background: #45a7f5;
    border-radius: 15px;
}
.switch i {
    position: absolute;
    left: 38px;
    top: -3px;
    width: 38px;
    height: 36px;
    background: #f3f3f3;
    border-radius: 50%;
    box-shadow: 0 0 4px rgba(0, 0, 0, .25);
}
.form-hint {
    margin: 6px 0 0 233px;
    font-size: 20.8px;
    line-height: 30px;
    color: #888;
}
.editor-row {
    display: flex;
    margin-top: 23px;
}
.editor-label {
    line-height: 54px;
}

/* editor */
.editor {
    width: 887px;
    height: 400px;
    border: 1px solid #d8d8d8;
    border-radius: 5px 5px 0 0;
    flex: none;
}
.editor-bar {
    height: 122px;
    padding: 4px 0 0 5px;
    background: linear-gradient(#fff, #f1f1f1);
    border-bottom: 1px solid #d4d4d4;
    box-shadow: 0 2px 4px rgba(0, 0, 0, .08);
    border-radius: 5px 5px 0 0;
}
.bar-row {
    display: flex;
    align-items: center;
    height: 37.5px;
}
.tb {
    flex: none;
    width: 36px;
    height: 36px;
    display: flex;
    align-items: center;
    justify-content: center;
    color: #444;
}
.bar-row-two .tb {
    width: 35.5px;
}
.bar-row-two .caret {
    width: 15px;
}
.tb-html {
    font-family: "Liberation Sans", sans-serif;
    font-size: 10.5px;
    font-weight: 700;
    color: #5a8ab5;
}
.tb-b, .tb-i, .tb-u, .tb-a {
    font-family: "Liberation Serif", serif;
    font-weight: 700;
    font-size: 23px;
}
.tb-i {
    font-style: italic;
}
.tb-u {
    text-decoration: underline;
}
.tb-abc {
    font-family: "Liberation Serif", serif;
    font-size: 13px;
    font-weight: 700;
    text-decoration: line-through;
}
.tb-a {
    font-size: 27px;
}
.bar-row-two .tb-table {
    width: 36.2px;
}
.caret {
    flex: none;
    width: 16px;
    display: flex;
    justify-content: center;
}
.caret-tight {
    justify-content: flex-start;
    padding-left: 1px;
}
.caret::after {
    content: "";
    border-top: 5px solid #222;
    border-left: 4px solid transparent;
    border-right: 4px solid transparent;
}
.sep {
    flex: none;
    width: 15px;
    height: 28px;
    background: linear-gradient(#d2d2d2, #d2d2d2) center / 1px 100% no-repeat;
}
.sep-tight {
    width: 12px;
}
.sep-wide {
    width: 54px;
    background-position: 6px 0;
}
.sep-narrow {
    width: 16px;
    margin-right: 1px;
}
.ed-select {
    position: relative;
    flex: none;
    width: 111px;
    height: 33px;
    margin-right: 3px;
    padding-left: 8px;
    font-size: 17px;
    line-height: 31px;
    color: #888;
    background: #fff;
    border: 1px solid #ddd;
    border-radius: 4px;
}
.ed-select-first {
    margin-left: 2px;
}
.ed-select::after {
    content: "";
    position: absolute;
    right: 3px;
    top: 13px;
    border-top: 5px solid #222;
    border-left: 4px solid transparent;
    border-right: 4px solid transparent;
}
.ed-select::before {
    content: "";
    position: absolute;
    right: 13px;
    top: 0;
    bottom: 0;
    width: 1px;
    background: #e2e2e2;
}
.editor-body {
    display: flex;
    height: 276px;
    background: #fff;
}
.editor-text {
    flex: 1;
    padding: 11px 0 0 11px;
    font-size: 24px;
    line-height: 36px;
    color: #222;
}
.editor-scroll {
    width: 21px;
    margin-right: 2px;
    background: #f1f1f1;
}
.scroll-up {
    display: block;
    width: 0;
    height: 0;
    margin: 9px auto 11px;
    border-bottom: 7px solid #8a8a8a;
    border-left: 6px solid transparent;
    border-right: 6px solid transparent;
}
.scroll-thumb {
    display: block;
    height: 240px;
    background: #c1c1c1;
}

/* fixed bar under the form */
.footer-bar {
    position: relative;
    z-index: 1;
    flex: none;
    display: flex;
    align-items: center;
    gap: 31px;
    height: 89px;
    padding-left: 398px;
    background: #e5e5ea;
    box-shadow: 0 -6px 10px rgba(229, 229, 234, .8);
}
.btn-screen {
    display: flex;
    align-items: center;
    justify-content: center;
    gap: 10px;
    width: 180px;
    height: 55px;
    font-size: 22px;
    color: #999;
    background: #f5f5f5;
    border: 1px solid #ececec;
    border-radius: 3px;
}
.btn-save {
    width: 131px;
    height: 50px;
    font-size: 21.5px;
    line-height: 50px;
    text-align: center;
    color: #fff;
    background: #45a7f5;
    border-radius: 3px;
}
.quick-btn {
    position: absolute;
    right: 1px;
    top: 355px;
    width: 72px;
    height: 72px;
    display: flex;
    justify-content: center;
    align-items: center;
    background: #fff;
    border: 1px solid #dcdcdc;
}
.red-arrow {
    position: absolute;
    left: -1px;
    top: 0;
    z-index: 5;
    pointer-events: none;
}
```
